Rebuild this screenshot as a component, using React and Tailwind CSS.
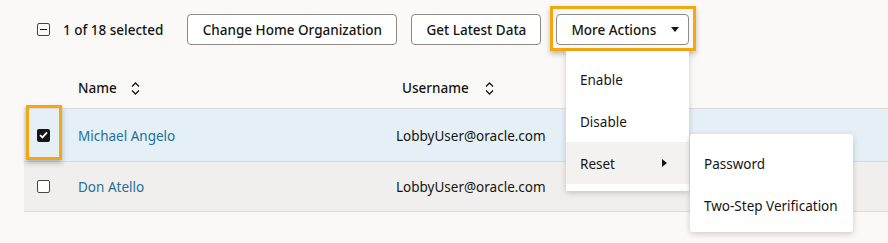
import React from 'react';

const SortIcon = () => (
  <svg width="9" height="13" viewBox="0 0 9 13" fill="none" stroke="#161513" strokeWidth="1.3">
    <path d="M1 4.5 L4.5 1 L8 4.5" />
    <path d="M1 8.5 L4.5 12 L8 8.5" />
  </svg>
);

const CheckedBox = () => (
  <span className="flex h-[13px] w-[13px] items-center justify-center rounded-[2px] bg-[#161513]">
    <svg width="9" height="8" viewBox="0 0 9 8" fill="none" stroke="white" strokeWidth="1.8">
      <path d="M1 4.2 L3.4 6.4 L8 1.4" />
    </svg>
  </span>
);

const EmptyBox = () => (
  <span className="block h-[13px] w-[13px] rounded-[2px] border-[1.5px] border-[#4a4743] bg-white" />
);

const Highlight = ({ className }) => (
  <span className={`pointer-events-none absolute border-[3px] border-[#f5a70f] shadow-[0_3px_5px_rgba(0,0,0,0.25)] ${className}`} />
);

const rows = [
  { name: 'Michael Angelo', user: 'LobbyUser@oracle.com', selected: true },
  { name: 'Don Atello', user: 'LobbyUser@oracle.com', selected: false },
];

export default function App() {
  return (
    <div className="relative h-[243px] w-[888px] overflow-hidden bg-[#fbf9f8] text-[13.5px] text-[#161513]" style={{ fontFamily: '"Noto Sans", sans-serif' }}>
      {/* Toolbar */}
      <div className="flex h-[65px] items-start pl-[37px] pt-[14px]">
        <div className="flex h-[31px] items-center">
          <span className="flex h-[13px] w-[13px] items-center justify-center rounded-[2px] border-[1.5px] border-[#4e4235]">
            <span className="block h-[1.5px] w-[7px] bg-[#161513]" />
          </span>
          <span className="ml-[13px] pt-[2px] font-medium">1 of 18 selected</span>
        </div>
        <button className="ml-[24px] h-[31px] w-[210px] rounded-[4px] border border-[#8f8b86] bg-white pt-[2px] font-medium">
          Change Home Organization
        </button>
        <button className="ml-[14px] h-[31px] w-[130px] rounded-[4px] border border-[#8f8b86] bg-white pt-[2px] font-medium">
          Get Latest Data
        </button>
        <div className="relative ml-[15px]">
          <Highlight className="-left-[6px] -right-[7px] -top-[8px] -bottom-[6px]" />
          <button className="flex h-[31px] w-[133px] items-center rounded-[4px] border border-[#8f8b86] bg-white pl-[14px] font-medium">
            <span className="pt-[2px]">More Actions</span>
            <svg className="ml-[15px]" width="8" height="5" viewBox="0 0 8 5" fill="#161513">
              <path d="M0 0 H8 L4 5 Z" />
            </svg>
          </button>
        </div>
      </div>

      {/* Table */}
      <div className="ml-[24px]">
        <div className="flex h-[44px] items-center border-b border-[#dedbd7] pt-[3px] font-medium">
          <div className="w-[54px]" />
          <div className="flex w-[324px] items-center">
            <span>Name</span>
            <span className="ml-[14px] flex"><SortIcon /></span>
          </div>
          <div className="flex items-center">
            <span>Username</span>
            <span className="ml-[16px] flex"><SortIcon /></span>
          </div>
        </div>
        {rows.map((r, i) => (
          <div
            key={r.name}
            className={`flex items-center border-b border-[#dedbd7] ${r.selected ? 'h-[53px] bg-[#e4f0f6]' : 'h-[50px] bg-[#f1efed]'}`}
          >
            <div className="relative flex w-[54px] justify-start pl-[13px]">
              {r.selected ? <CheckedBox /> : <EmptyBox />}
              {i === 0 && <Highlight className="left-[2px] w-[36px] -top-[24px] h-[55px]" />}
            </div>
            <div className="w-[318px] pt-[2px] text-[#22709a]">{r.name}</div>
            <div className="pt-[2px]">{r.user}</div>
          </div>
        ))}
      </div>

      {/* More Actions menu */}
      <div className="absolute left-[566px] top-[51px] w-[123px] bg-white py-[7px] shadow-[0_2px_6px_rgba(0,0,0,0.18)]">
        <div className="flex h-[42px] items-center pl-[14px] pt-[2px]">Enable</div>
        <div className="flex h-[42px] items-center pl-[14px] pt-[2px]">Disable</div>
        <div className="flex h-[42px] items-center justify-between bg-[#f3f2f1] pl-[14px] pr-[22px]">
          <span className="pt-[2px]">Reset</span>
          <svg width="5" height="8" viewBox="0 0 5 8" fill="#161513">
            <path d="M0 0 L5 4 L0 8 Z" />
          </svg>
        </div>
      </div>

      {/* Reset submenu */}
      <div className="absolute left-[690px] top-[134px] w-[163px] rounded-[3px] bg-white pb-[6px] pt-[8px] shadow-[0_2px_6px_rgba(0,0,0,0.18)]">
        <div className="flex h-[42px] items-center pl-[14px] pt-[2px]">Password</div>
        <div className="flex h-[42px] items-center whitespace-nowrap pl-[14px] pt-[2px]">Two-Step Verification</div>
      </div>
    </div>
  );
}
